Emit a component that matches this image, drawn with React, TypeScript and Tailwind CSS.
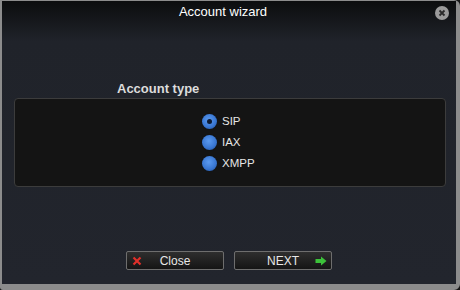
import React, { useState } from "react";

const options = ["SIP", "IAX", "XMPP"];

const Radio = ({ checked }: { checked: boolean }) => (
  <span className="relative flex h-[15px] w-[15px] items-center justify-center rounded-full bg-[radial-gradient(circle_at_45%_40%,#5b9af0_0%,#3a78d4_55%,#1f4f9a_100%)] shadow-[0_0_1px_#0a1a33]">
    {checked && <span className="h-[5px] w-[5px] rounded-full bg-[#0c1a33]" />}
  </span>
);

export default function App() {
  const [type, setType] = useState("SIP");

  return (
    <div className="h-[290px] w-[460px] overflow-hidden bg-[#161616] font-['Liberation_Sans',sans-serif]">
      <div className="flex h-full w-full flex-col rounded-tr-[6px] rounded-bl-[3px] rounded-br-[6px] bg-[#8c8c8c] pt-[1px] pl-[2px] pr-[4px] pb-[6px]">
        <div className="flex flex-1 flex-col bg-[linear-gradient(to_bottom,#0c0d0e_0px,#16181c_20px,#20232a_40px,#22252d_100%)]">
          {/* title bar */}
          <div className="relative flex h-[22px] items-center justify-center pr-[12px]">
            <span className="text-[13px] text-white">Account wizard</span>
            <button className="absolute right-[7px] top-[5px] flex h-[14px] w-[14px] items-center justify-center rounded-full bg-[#9b9b9b]">
              <svg width="8" height="8" viewBox="0 0 8 8">
                <path d="M1.5 1.5 L6.5 6.5 M6.5 1.5 L1.5 6.5" stroke="#2a2a2a" strokeWidth="1.8" />
              </svg>
            </button>
          </div>

          <div className="flex flex-1 flex-col pl-[12px] pr-[10px]">
            <div className="mt-[58px] pl-[103px] text-[13px] font-bold text-[#dcdcdc] leading-[16px]">
              Account type
            </div>
            <div className="mt-[1px] flex h-[89px] flex-col items-center justify-center gap-[5px] rounded-[4px] border border-[#3c3c3c] bg-[#141414] pb-[1px]">
              {options.map((o) => (
                <label
                  key={o}
                  onClick={() => setType(o)}
                  className="flex cursor-pointer items-center gap-[5px] text-[11.5px] leading-[16px] text-[#e6e6e6]"
                >
                  <Radio checked={type === o} />
                  <span className="w-[36px]">{o}</span>
                </label>
              ))}
            </div>

            <div className="mt-auto mb-[14px] flex justify-center gap-[10px] pr-[2px]">
              <button className="relative flex h-[19px] w-[98px] items-center justify-center rounded-[2px] border border-[#6e6e6e] bg-[linear-gradient(to_bottom,#2e2e2e,#151515)] text-[12px] text-[#e8e8e8]">
                <svg className="absolute left-[5px]" width="10" height="10" viewBox="0 0 10 10">
                  <path d="M1.5 1.5 L8.5 8.5 M8.5 1.5 L1.5 8.5" stroke="#e0302a" strokeWidth="2.2" />
                </svg>
                Close
              </button>
              <button className="relative flex h-[19px] w-[98px] items-center justify-center rounded-[2px] border border-[#6e6e6e] bg-[linear-gradient(to_bottom,#2e2e2e,#151515)] text-[12px] text-[#e8e8e8]">
                NEXT
                <svg className="absolute right-[4px]" width="12" height="10" viewBox="0 0 12 10">
                  <path d="M0.5 3 H6 V0.5 L11.5 5 L6 9.5 V7 H0.5 Z" fill="#3cc23a" />
                </svg>
              </button>
            </div>
          </div>
        </div>
      </div>
    </div>
  );
}
